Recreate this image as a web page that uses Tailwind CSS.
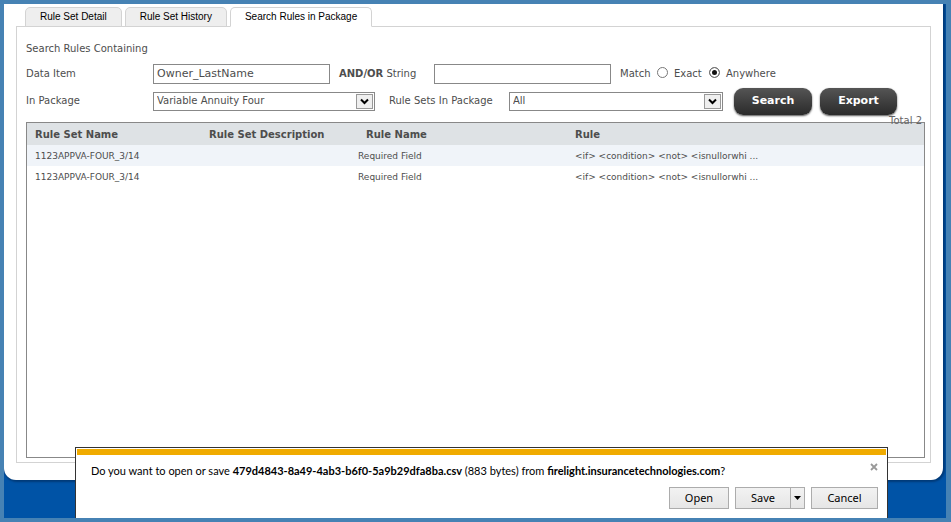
<!DOCTYPE html>
<html lang="en">
<head>
<meta charset="utf-8">
<title>Search Rules in Package</title>
<script src="https://cdn.jsdelivr.net/npm/@tailwindcss/browser@4"></script>
</head>
<body class="relative flex h-screen flex-col overflow-hidden border-4 border-r-[5px] border-[#4682b4] bg-[#0053a6] font-['DejaVu_Sans',Verdana,sans-serif] text-[10px] leading-4 text-[#4d4d4d]">
<main class="mr-[3px] mb-[38px] flex flex-1 flex-col rounded-b-xl bg-white pt-[3px] pr-3 pb-[17px] pl-3 shadow-[1px_1px_2px_1px_#003a78]">
  <nav class="z-10 -mb-px flex gap-[3px] pl-[9px] font-['Liberation_Sans',Arial,sans-serif] text-[10px] leading-[18px] text-black" aria-label="Rule set views">
    <a href="#detail" class="rounded-t-[5px] border border-[#d3d3d3] bg-[#eee] px-[14px]">Rule Set Detail</a>
    <a href="#history" class="rounded-t-[5px] border border-[#d3d3d3] bg-[#eee] px-[14px]">Rule Set History</a>
    <a href="#search" aria-current="page" class="rounded-t-[5px] border border-[#d3d3d3] border-b-white bg-white px-[14px]">Search Rules in Package</a>
  </nav>
  <section class="flex flex-1 flex-col border border-[#d3d3d3] pt-[14px] pr-[5px] pb-1 pl-[9px]">
    <form class="flex flex-col">
      <h1>Search Rules Containing</h1>
      <div class="mt-[7px] flex h-5 items-center">
        <label for="item" class="w-[127px]">Data Item</label>
        <input id="item" type="text" value="Owner_LastName" class="h-5 w-[177px] border border-[#888] bg-white px-[3px] pb-px text-[11px]">
        <label for="string" class="w-[104px] pl-[9px]"><b>AND/OR</b> String</label>
        <input id="string" type="text" class="h-5 w-[177px] border border-[#888] bg-white px-[3px] pb-px text-[11px]">
        <span class="w-[46px] pl-[9px]">Match</span>
        <label class="flex w-[52px] items-center gap-[6px]"><input type="radio" name="match" class="mb-[3px] size-[11px] shrink-0 appearance-none rounded-full border border-[#777] bg-white">Exact</label>
        <label class="flex items-center gap-[6px]"><input type="radio" name="match" checked class="mb-[3px] size-[11px] shrink-0 appearance-none rounded-full border border-[#777] bg-[#111] shadow-[inset_0_0_0_2px_white]">Anywhere</label>
      </div>
      <div class="mt-[3px] flex h-7 items-center">
        <label for="package" class="w-[127px]">In Package</label>
        <div class="relative w-[222px]">
          <select id="package" class="block h-[19px] w-full appearance-none border border-[#888] bg-white pl-[3px]"><option>Variable Annuity Four</option></select>
          <svg class="pointer-events-none absolute top-[2px] right-[2px] h-[15px] w-[17px]" viewBox="0 0 17 15"><rect x=".5" y=".5" width="16" height="14" fill="#efefef" stroke="#999"/><path d="M5 5.5l3.500 3.500L12 5.500" fill="none" stroke="#000" stroke-width="2"/></svg>
        </div>
        <label for="sets" class="w-[134px] pl-[14px]">Rule Sets In Package</label>
        <div class="relative w-[214px]">
          <select id="sets" class="block h-[19px] w-full appearance-none border border-[#888] bg-white pl-[3px]"><option>All</option></select>
          <svg class="pointer-events-none absolute top-[2px] right-[2px] h-[15px] w-[17px]" viewBox="0 0 17 15"><rect x=".5" y=".5" width="16" height="14" fill="#efefef" stroke="#999"/><path d="M5 5.5l3.500 3.500L12 5.500" fill="none" stroke="#000" stroke-width="2"/></svg>
        </div>
        <button type="button" class="ml-[11px] h-[27px] w-[78px] rounded-[9px] bg-linear-to-b from-[#555] to-[#2b2b2b] text-[11px] font-bold text-white shadow-[0_1px_2px_#555]">Search</button>
        <button type="button" class="ml-2 h-[27px] w-[77px] rounded-[9px] bg-linear-to-b from-[#555] to-[#2b2b2b] text-[11px] font-bold text-white shadow-[0_1px_2px_#555]">Export</button>
      </div>
    </form>
    <div class="relative mt-[7px] flex-1 border border-[#888]">
      <p class="absolute -top-[10px] right-[2px] text-[#666]">Total 2</p>
      <table class="w-full table-fixed border-collapse text-left">
        <colgroup><col class="w-[174px]"><col class="w-[149px]"><col class="w-[217px]"><col></colgroup>
        <thead class="bg-[#dee2e5]">
          <tr class="h-[22px]"><th class="pt-[2px] pl-2">Rule Set Name</th><th class="pt-[2px] pl-2">Rule Set Description</th><th class="pt-[2px] pl-4">Rule Name</th><th class="pt-[2px] pl-2">Rule</th></tr>
        </thead>
        <tbody class="text-[9px]">
          <tr class="h-[21px] bg-[#f0f4f9]"><td class="pl-2">1123APPVA-FOUR_3/14</td><td></td><td class="pl-2">Required Field</td><td class="pl-2">&lt;if&gt; &lt;condition&gt; &lt;not&gt; &lt;isnullorwhi ...</td></tr>
          <tr class="h-[22px]"><td class="pl-2">1123APPVA-FOUR_3/14</td><td></td><td class="pl-2">Required Field</td><td class="pl-2">&lt;if&gt; &lt;condition&gt; &lt;not&gt; &lt;isnullorwhi ...</td></tr>
        </tbody>
      </table>
    </div>
  </section>
</main>
<div role="dialog" aria-label="File download" class="absolute right-[58px] bottom-0 left-[71px] z-20 border border-b-0 border-[#333] bg-white px-px pt-px font-[Lato,'Segoe_UI',sans-serif] text-[11px] text-black">
  <div class="h-[6px] bg-[#f0ab00]"></div>
  <div class="flex items-start justify-between pt-[8px] pr-2 pl-[14px]">
    <p>Do you want to open or save <b>479d4843-8a49-4ab3-b6f0-5a9b29dfa8ba.csv</b> (883 bytes) from <b>firelight.insurancetechnologies.com</b>?</p>
    <button type="button" aria-label="Close"><svg class="size-2" viewBox="0 0 8 8"><path d="M1 1l6 6M7 1L1 7" stroke="#999" stroke-width="1.8"/></svg></button>
  </div>
  <div class="flex justify-end gap-[6px] pt-[8px] pr-[8px] pb-[9px] font-['Noto_Sans','Segoe_UI',sans-serif]">
    <button type="button" class="h-[22px] w-[60px] border border-[#acacac] bg-linear-to-b from-[#f2f2f2] to-[#e6e6e6]">Open</button>
    <div class="flex h-[22px] border border-[#acacac] bg-linear-to-b from-[#f2f2f2] to-[#e6e6e6]">
      <button type="button" class="w-[54px]">Save</button>
      <button type="button" aria-label="Save options" class="flex w-[14px] items-center justify-center border-l border-[#acacac]"><svg class="h-1 w-[7px]" viewBox="0 0 7 4"><path d="M0 0h7L3.500 4z"/></svg></button>
    </div>
    <button type="button" class="h-[22px] w-[67px] border border-[#acacac] bg-linear-to-b from-[#f2f2f2] to-[#e6e6e6]">Cancel</button>
  </div>
</div>
</body>
</html>
